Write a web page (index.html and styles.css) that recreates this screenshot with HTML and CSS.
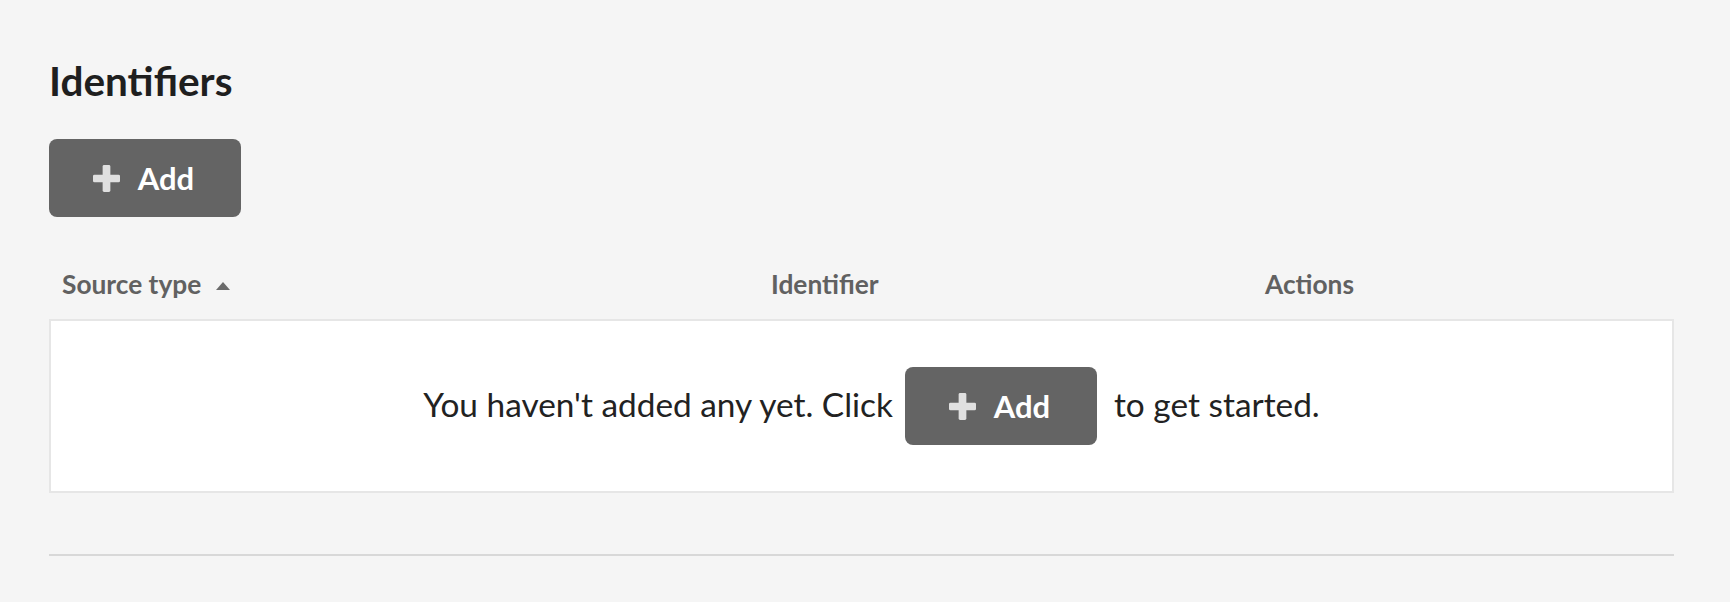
FILE: index.html
```html
<!DOCTYPE html>
<html lang="en">
<head>
    <meta charset="UTF-8">
    <meta name="viewport" content="width=device-width, initial-scale=1.0">
    <title>Identifiers</title>
    <link rel="stylesheet" href="styles.css">
</head>
<body>
    <div class="page">
        <h1>Identifiers</h1>

        <button class="add-btn" type="button">
            <svg class="plus" viewBox="0 0 28 28" aria-hidden="true">
                <rect x="10" y="0" width="8" height="28" rx="1.5"/>
                <rect x="0" y="10" width="28" height="8" rx="1.5"/>
            </svg>
            <span>Add</span>
        </button>

        <div class="table-head">
            <div class="col col-source">Source type <span class="sort-up"></span></div>
            <div class="col col-id">Identifier</div>
            <div class="col col-actions">Actions</div>
        </div>

        <div class="empty-box">
            <span class="empty-text">You haven't added any yet. Click</span>
            <button class="add-btn add-btn-inline" type="button">
                <svg class="plus" viewBox="0 0 28 28" aria-hidden="true">
                    <rect x="10" y="0" width="8" height="28" rx="1.5"/>
                    <rect x="0" y="10" width="28" height="8" rx="1.5"/>
                </svg>
                <span>Add</span>
            </button>
            <span class="empty-text">to get started.</span>
        </div>

        <hr class="divider">
    </div>
</body>
</html>
```

FILE: styles.css
```css
/* identifiers page */
body {
    font-family: Lato, "Open Sans", sans-serif;
    background-color: #f5f5f5;
    color: #222;
    margin: 0;
    padding: 0;
}
.page {
    padding: 57px 56px 0 49px;
}
h1 {
    font-size: 40.5px;
    line-height: 48px;
    font-weight: 700;
    color: #1f1f1f;
    margin: 0 0 34px 0;
}
.add-btn {
    display: inline-flex;
    align-items: center;
    justify-content: center;
    gap: 18px;
    width: 192px;
    height: 78px;
    padding: 0 3px 0 0;
    background-color: #646464;
    color: #fff;
    border: none;
    border-radius: 8px;
    font-family: inherit;
    font-size: 31px;
    font-weight: 700;
    cursor: pointer;
}
.add-btn:hover {
    background-color: #575757;
}
.plus {
    width: 27px;
    height: 27px;
    fill: #e0e0e0;
}
.table-head {
    display: grid;
    grid-template-columns: 709px 494px 1fr;
    margin-top: 49px;
    padding-bottom: 17px;
    font-size: 26.3px;
    line-height: 36px;
    font-weight: 700;
    color: #616161;
}
.col {
    padding-left: 13px;
}
.sort-up {
    display: inline-block;
    width: 0;
    height: 0;
    margin-left: 8px;
    vertical-align: 4px;
    border-left: 7.5px solid transparent;
    border-right: 7.5px solid transparent;
    border-bottom: 8px solid #6b6b6b;
}
.empty-box {
    display: flex;
    align-items: center;
    justify-content: center;
    height: 170px;
    padding-left: 20px;
    box-sizing: content-box;
    background-color: #fff;
    border: 2px solid #e6e6e6;
    font-size: 33.4px;
    color: #222;
}
.empty-text {
    padding-bottom: 4px;
}
.add-btn-inline {
    margin: 0 17px 0 12px;
}
.divider {
    border: none;
    border-top: 2px solid #d8d8d8;
    margin: 61px 0 0 0;
}
```
